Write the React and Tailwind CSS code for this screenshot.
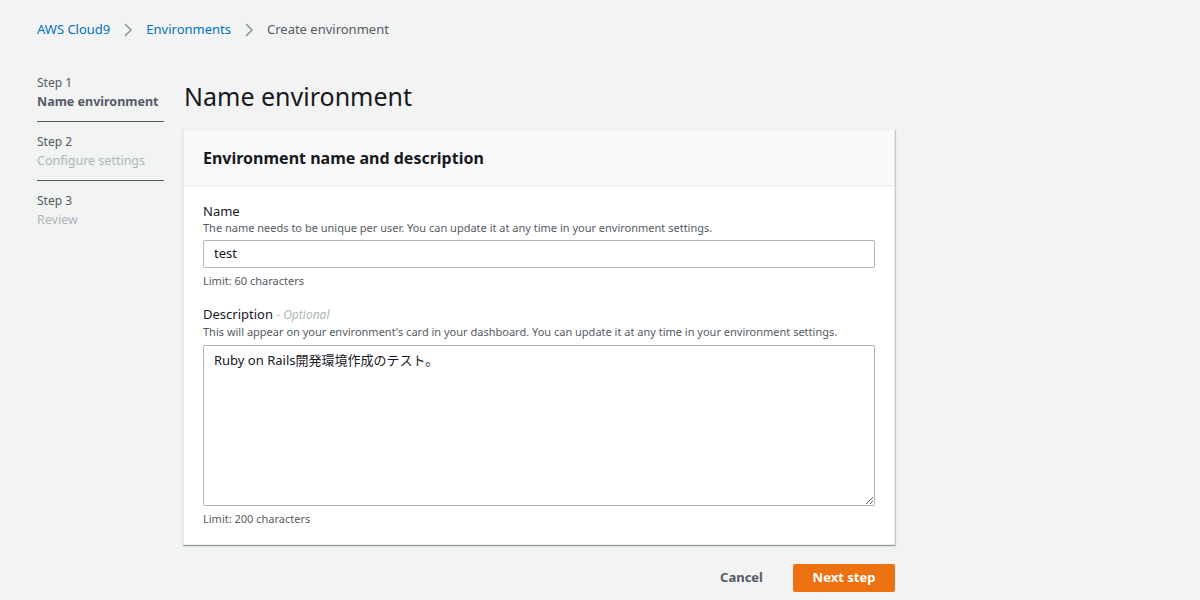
const steps = [
  { step: "Step 1", name: "Name environment", active: true },
  { step: "Step 2", name: "Configure settings" },
  { step: "Step 3", name: "Review" },
];

const Chevron = () => (
  <svg width="10" height="16" viewBox="0 0 10 16" className="mx-[13px]">
    <path d="M2 2l6 6-6 6" fill="none" stroke="#879596" strokeWidth="1.5" />
  </svg>
);

export default function App() {
  return (
    <div
      className="w-full h-[600px] overflow-hidden bg-[#f2f3f3] text-[#16191f]"
      style={{ fontFamily: '"Noto Sans", "Noto Sans CJK JP", sans-serif' }}
    >
      {/* BREADCRUMB */}
      <div className="flex items-center pl-[37px] pt-[19px] h-[40px] text-[13px]">
        <span className="text-[#0073bb]">AWS Cloud9</span>
        <Chevron />
        <span className="text-[#0073bb]">Environments</span>
        <Chevron />
        <span className="text-[#545b64]">Create environment</span>
      </div>

      <div className="flex pl-[37px] pt-[33px]">
        {/* STEPS */}
        <nav className="w-[127px] shrink-0 flex flex-col">
          {steps.map((s, i) => (
            <div
              key={s.step}
              className={`pb-[9px] ${i < steps.length - 1 ? "border-b border-[#545b64] mb-[10px]" : ""}`}
            >
              <div className="text-[12px] leading-[19px] text-[#545b64]">{s.step}</div>
              <div
                className={`text-[12.5px] leading-[20px] ${
                  s.active ? "font-bold text-[#545b64]" : "text-[#aab7b8]"
                }`}
              >
                {s.name}
              </div>
            </div>
          ))}
        </nav>

        {/* MAIN */}
        <main className="ml-[19px] w-[712px] pt-[10px]">
          <h1 className="text-[25px] leading-[30px] font-normal pl-[1px] -mt-[2px]">Name environment</h1>

          <section className="mt-[18px] bg-white border border-[#eaeded] shadow-[0_1px_1px_0_rgba(0,28,36,0.3),1px_1px_1px_0_rgba(0,28,36,0.15)]">
            <div className="bg-[#fafafa] border-b border-[#eaeded] h-[56px] flex items-center px-[19px]">
              <h2 className="text-[16px] font-bold">Environment name and description</h2>
            </div>

            <div className="px-[19px] pt-[16px] pb-[17px]">
              <div className="text-[13px] leading-[18px]">Name</div>
              <div className="text-[11px] leading-[15px] text-[#545b64]">
                The name needs to be unique per user. You can update it at any time in your environment settings.
              </div>
              <div className="mt-[5px] h-[28px] border border-[#aab7b8] rounded-[2px] flex items-center px-[10px] text-[13px]">
                test
              </div>
              <div className="mt-[5px] text-[11px] leading-[16px] text-[#545b64]">Limit: 60 characters</div>

              <div className="mt-[16px] text-[13px] leading-[18px]">
                Description <span className="italic text-[#aab7b8] text-[12px]">- Optional</span>
              </div>
              <div className="text-[11px] leading-[15px] text-[#545b64]">
                This will appear on your environment's card in your dashboard. You can update it at any time in your environment settings.
              </div>
              <textarea
                readOnly
                defaultValue="Ruby on Rails開発環境作成のテスト。"
                className="mt-[6px] block w-full h-[161px] border border-[#aab7b8] rounded-[2px] px-[10px] py-[4px] text-[13px] leading-[20px] text-[#16191f] outline-none resize-y"
                style={{ fontFamily: '"Noto Sans", "Noto Sans CJK JP", sans-serif' }}
              />
              <div className="mt-[5px] text-[11px] leading-[16px] text-[#545b64]">Limit: 200 characters</div>
            </div>
          </section>

          <div className="flex justify-end items-center mt-[19px]">
            <button className="text-[13px] font-bold text-[#545b64] px-[20px] h-[28px]">Cancel</button>
            <button className="ml-[10px] bg-[#ec7211] text-white text-[13px] font-bold w-[102px] h-[28px] rounded-[2px]">
              Next step
            </button>
          </div>
        </main>
      </div>
    </div>
  );
}
